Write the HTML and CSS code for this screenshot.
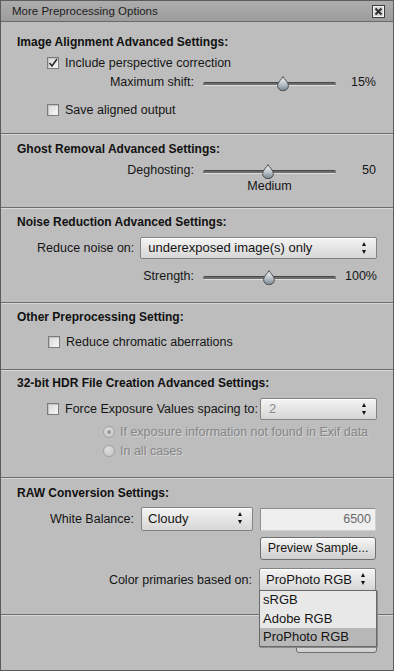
FILE: index.html
```html
<!DOCTYPE html>
<html>
<head>
<meta charset="utf-8">
<link rel="stylesheet" href="styles.css">
</head>
<body>
<div class="win">
  <div class="titlebar">
    <span class="title">More Preprocessing Options</span>
    <svg class="close" width="13" height="13" viewBox="0 0 13 13">
      <rect x="0.5" y="0.5" width="12" height="12" fill="#d4d4d4" stroke="#3e3e3e"/>
      <rect x="1.5" y="1.5" width="10" height="10" fill="none" stroke="#f4f4f4"/>
      <path d="M3.5 3.5 L9.5 9.5 M9.5 3.5 L3.5 9.5" stroke="#2e2e2e" stroke-width="2"/>
    </svg>
  </div>

  <div class="sec s1">
    <div class="hd">Image Alignment Advanced Settings:</div>
    <div class="row cbrow mt5"><span class="cb"><svg width="12" height="12" viewBox="0 0 12 12"><path d="M2.5 6 L5 9 L10 2" fill="none" stroke="#2a2a2a" stroke-width="1.6"/></svg></span>Include perspective correction</div>
    <div class="srow mt3"><span class="slabel">Maximum shift:</span><div class="track"><svg class="thumb" style="left:60%" width="12" height="15" viewBox="0 0 12 15"><use href="#th"/></svg></div><span class="sval">15%</span></div>
    <div class="row cbrow mt12"><span class="cb"></span>Save aligned output</div>
  </div>

  <div class="sec s2">
    <div class="hd">Ghost Removal Advanced Settings:</div>
    <div class="srow mt5"><span class="slabel">Deghosting:</span><div class="track"><svg class="thumb" style="left:49%" width="12" height="15" viewBox="0 0 12 15"><use href="#th"/></svg></div><span class="sval">50</span></div>
    <div class="srow"><span></span><span class="medium">Medium</span><span></span></div>
  </div>

  <div class="sec s3">
    <div class="hd">Noise Reduction Advanced Settings:</div>
    <div class="noise mt7"><span class="nlabel">Reduce noise on:</span><div class="sel nsel">underexposed image(s) only<span class="arr"></span></div></div>
    <div class="srow mt9"><span class="slabel">Strength:</span><div class="track"><svg class="thumb" style="left:49.5%" width="12" height="15" viewBox="0 0 12 15"><use href="#th"/></svg></div><span class="sval">100%</span></div>
  </div>

  <div class="sec s4">
    <div class="hd">Other Preprocessing Setting:</div>
    <div class="row cbrow cb2 mt9"><span class="cb"></span>Reduce chromatic aberrations</div>
  </div>

  <div class="sec s5">
    <div class="hd">32-bit HDR File Creation Advanced Settings:</div>
    <div class="force mt7"><span class="cb"></span><span>Force Exposure Values spacing to:</span><div class="sel fsel dis">2<span class="arr"></span></div></div>
    <div class="row rrow mt4"><span class="radio on"></span>If exposure information not found in Exif data</div>
    <div class="row rrow mt3"><span class="radio"></span>In all cases</div>
  </div>

  <div class="sec s6">
    <div class="hd">RAW Conversion Settings:</div>
    <div class="raw mt6">
      <span class="rlabel">White Balance:</span>
      <div class="sel">Cloudy<span class="arr"></span></div>
      <div class="field">6500</div>
      <div class="btn c3">Preview Sample...</div>
      <span class="rlabel span2 low">Color primaries based on:</span>
      <div class="sel low drop">ProPhoto RGB<span class="arr"></span>
        <div class="list">
          <div class="item">sRGB</div>
          <div class="item">Adobe RGB</div>
          <div class="item hi">ProPhoto RGB</div>
        </div>
      </div>
    </div>
  </div>

  <div class="sec s7">
    <div class="btn okbtn"></div>
  </div>
</div>

<svg width="0" height="0" style="position:absolute">
  <defs>
    <linearGradient id="tg" x1="0" y1="0" x2="0" y2="1">
      <stop offset="0" stop-color="#f2f5f7"/>
      <stop offset="0.55" stop-color="#b9c2c9"/>
      <stop offset="1" stop-color="#76828c"/>
    </linearGradient>
    <symbol id="th" viewBox="0 0 12 15">
      <path d="M6 0.6 C7.2 3.2 11.4 6.2 11.4 9.4 A5.4 5.4 0 0 1 0.6 9.4 C0.6 6.2 4.8 3.2 6 0.6 Z" fill="url(#tg)" stroke="#4a4e52" stroke-width="1"/>
    </symbol>
  </defs>
</svg>
</body>
</html>
```

FILE: styles.css
```css
* { box-sizing: border-box; }
body {
  margin: 0;
  background: #bdbdbd;
  font-family: "Liberation Sans", Arial, sans-serif;
  font-size: 12.5px;
  color: #151515;
}
.win {
  width: 394px;
  border: 1px solid #5c5c5c;
  background: #bdbdbd;
  position: relative;
}
.titlebar {
  height: 21px;
  background: linear-gradient(#adadad, #9c9c9c);
  border-bottom: 1px solid #6a6a6a;
  display: flex;
  align-items: center;
  justify-content: space-between;
  padding: 0 8px 0 11px;
}
.title { font-size: 11.5px; color: #1c1c1c; }
.close { display: block; }

.sec {
  padding: 0 16px;
  border-top: 1px solid #6c6c6c;
  box-shadow: inset 0 1px 0 #d8d8d8;
}
.s1 { border-top: 0; box-shadow: none; height: 111px; padding-top: 12px; }
.s2 { height: 74px; padding-top: 7px; }
.s3 { height: 95px; padding-top: 6px; }
.s4 { height: 67px; padding-top: 6px; }
.s5 { height: 108px; padding-top: 5px; }
.s6 { height: 137px; padding-top: 7px; }
.s7 { height: 56px; padding-top: 15px; display: flex; justify-content: flex-end; }

.mt3 { margin-top: 3px; }
.mt4 { margin-top: 4px; }
.mt5 { margin-top: 5px; }
.mt6 { margin-top: 6px; }
.mt7 { margin-top: 7px; }
.mt9 { margin-top: 9px; }
.mt12 { margin-top: 12px; }

.hd {
  font-weight: bold;
  font-size: 12px;
  line-height: 16px;
  height: 16px;
  color: #111;
}
.row {
  height: 16px;
  line-height: 16px;
  display: flex;
  align-items: center;
}
.cbrow { padding-left: 30px; }
.cb2 { padding-left: 31px; }
.cb {
  width: 12px;
  height: 12px;
  flex: none;
  margin-right: 6px;
  border: 1px solid #7c7c7c;
  background: linear-gradient(135deg, #d9d9d9, #f7f7f7);
  box-shadow: inset 1px 1px 0 #c4c4c4;
  display: block;
}
.cb svg { display: block; margin: -1px 0 0 -1px; }

.srow {
  display: grid;
  grid-template-columns: 177px 133px 1fr;
  column-gap: 9px;
  height: 16px;
  line-height: 16px;
  align-items: center;
}
.slabel { text-align: right; }
.sval { text-align: right; padding-right: 1px; }
.medium { text-align: center; }
.track { position: relative; height: 16px; }
.track::before {
  content: "";
  position: absolute;
  left: 0;
  right: 0;
  top: 8px;
  height: 4px;
  border-radius: 2px;
  background: linear-gradient(#474747 0 1px, #6e6e6e 1px 3px, #dedede 3px);
}
.thumb {
  position: absolute;
  top: 2px;
  transform: translateX(-50%);
  display: block;
}

.sel {
  position: relative;
  height: 22px;
  line-height: 20px;
  padding-left: 6px;
  border: 1px solid #838383;
  border-radius: 2px;
  background: linear-gradient(#f4f4f4, #e2e2e2 60%, #d6d6d6);
  box-shadow: inset 0 1px 0 #ffffff;
  font-size: 13px;
  color: #141414;
}
.arr {
  position: absolute;
  right: 9px;
  top: 4px;
  width: 5px;
  height: 12px;
}
.arr::before, .arr::after {
  content: "";
  position: absolute;
  left: 0;
  border-left: 2.5px solid transparent;
  border-right: 2.5px solid transparent;
}
.arr::before { top: 0; border-bottom: 4px solid #111; }
.arr::after { bottom: 0; border-top: 4px solid #111; }

.noise { display: flex; align-items: center; height: 22px; }
.nlabel { margin-left: 20px; margin-right: 6px; }
.nsel { flex: 1; padding-left: 7px; }

.force { display: flex; align-items: center; height: 22px; padding-left: 30px; }
.fsel { margin-left: auto; width: 117px; padding-left: 8px; }
.dis { color: #8a8a8a; }

.rrow { padding-left: 86px; color: #868686; text-shadow: 1px 1px 0 #d4d4d4; }
.radio {
  width: 12px;
  height: 12px;
  border-radius: 50%;
  border: 1px solid #a2a2a2;
  background: radial-gradient(circle at 40% 35%, #dedede, #c2c2c2);
  margin-right: 5px;
  flex: none;
  position: relative;
}
.radio.on::after {
  content: "";
  position: absolute;
  left: 3px;
  top: 3px;
  width: 4px;
  height: 4px;
  border-radius: 50%;
  background: #9a9a9a;
}

.raw {
  display: grid;
  grid-template-columns: 117px 112px 116px;
  grid-template-rows: 24px 23px 23px;
  column-gap: 7px;
  row-gap: 6px;
  align-items: center;
}
.rlabel { text-align: right; }
.raw .sel { height: 24px; line-height: 22px; }
.raw .sel.low { height: 23px; line-height: 21px; margin-top: 4px; }
.raw .rlabel.low { margin-top: 4px; padding-right: 1px; }
.raw .drop { margin-left: -1px; }
.span2 { grid-column: 1 / 3; }
.c3 { grid-column: 3; }
.field {
  height: 23px;
  line-height: 21px;
  text-align: right;
  padding-right: 4px;
  border: 1px solid #8e8e8e;
  border-right-color: #d0d0d0;
  border-bottom-color: #d0d0d0;
  background: #efefef;
  color: #6a6a6a;
  font-size: 12.5px;
}
.btn {
  height: 23px;
  line-height: 21px;
  text-align: center;
  border: 1px solid #6f6f6f;
  border-radius: 3px;
  background: linear-gradient(#f6f6f6, #e0e0e0 55%, #cfcfcf);
  box-shadow: inset 0 1px 0 #fff;
  font-size: 12.5px;
  color: #161616;
}
.okbtn { width: 81px; }

.list {
  position: absolute;
  left: -1px;
  top: 21px;
  width: 118px;
  height: 57px;
  border: 1px solid #6a6a6a;
  background: #e8e8e8;
  box-shadow: 1px 1px 0 #8a8a8a;
  z-index: 2;
}
.item {
  height: 18.5px;
  line-height: 18px;
  padding-left: 3px;
  font-size: 13px;
  color: #141414;
}
.item.hi { background: #b7b7b7; height: 18px; }
```
